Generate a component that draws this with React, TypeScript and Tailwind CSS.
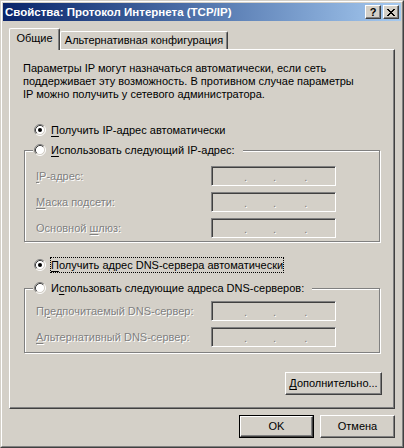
import React from 'react'

// classic Windows 2000 dialog: TCP/IP properties

const raised =
  'border border-t-white border-l-white border-r-[#404040] border-b-[#404040] shadow-[inset_-1px_-1px_0_#808080] bg-[#d4d0c8]'
const sunken =
  'border border-t-[#808080] border-l-[#808080] border-r-white border-b-white shadow-[inset_1px_1px_0_#404040,inset_-1px_-1px_0_#d4d0c8] bg-[#d4d0c8]'
const etched = 'border border-[#808080] shadow-[inset_1px_1px_0_#fff,1px_1px_0_#fff]'
const disabled = 'text-[#808080] [text-shadow:1px_1px_0_#fff]'

function U({ children }: { children: React.ReactNode }) {
  return <span className="underline decoration-1 underline-offset-[2px]">{children}</span>
}

function Radio({ checked }: { checked?: boolean }) {
  return (
    <svg width="12" height="12" viewBox="0 0 12 12" className="shrink-0">
      <circle cx="6" cy="6" r="4.5" fill="#fff" />
      <path d="M2.11 9.89A5.5 5.5 0 0 1 9.89 2.11" stroke="#808080" fill="none" />
      <path d="M9.89 2.11A5.5 5.5 0 0 1 2.11 9.89" stroke="#fff" fill="none" />
      <path d="M2.82 9.18A4.5 4.5 0 0 1 9.18 2.82" stroke="#404040" fill="none" />
      <path d="M9.18 2.82A4.5 4.5 0 0 1 2.82 9.18" stroke="#d4d0c8" fill="none" />
      {checked && <circle cx="6" cy="6" r="2" fill="#000" />}
    </svg>
  )
}

function CloseGlyph() {
  const rows = [
    [0, 1, 6, 7],
    [1, 2, 5, 6],
    [2, 3, 4, 5],
    [3, 4],
    [2, 3, 4, 5],
    [1, 2, 5, 6],
    [0, 1, 6, 7],
  ]
  return (
    <svg width="8" height="7" viewBox="0 0 8 7" shapeRendering="crispEdges">
      {rows.map((cols, y) =>
        cols.map(x => <rect key={`${x}-${y}`} x={x} y={y} width="1" height="1" fill="#000" />)
      )}
    </svg>
  )
}

function IpBox() {
  return (
    <div className={`${sunken} w-[125px] h-[20px] flex items-center text-[#808080]`}>
      <span className="w-[32px] shrink-0" />
      <span className="[text-shadow:1px_1px_0_#fff] leading-[13px] mt-[3px]">.</span>
      <span className="w-[26px] shrink-0" />
      <span className="[text-shadow:1px_1px_0_#fff] leading-[13px] mt-[3px]">.</span>
      <span className="w-[28px] shrink-0" />
      <span className="[text-shadow:1px_1px_0_#fff] leading-[13px] mt-[3px]">.</span>
    </div>
  )
}

function FieldRow({ label }: { label: React.ReactNode }) {
  return (
    <div className="flex items-center h-[20px]">
      <span className={`w-[186px] pl-[11px] leading-[13px] whitespace-nowrap ${disabled}`}>{label}</span>
      <IpBox />
    </div>
  )
}

function RadioRow({ checked, focused, children }: { checked?: boolean; focused?: boolean; children: React.ReactNode }) {
  return (
    <div className="flex items-center h-[16px] ml-[10px]">
      <Radio checked={checked} />
      <span
        className={`ml-[4px] h-[16px] leading-[14px] whitespace-nowrap border ${
          focused ? 'border-dotted border-black' : 'border-transparent'
        }`}
      >
        {children}
      </span>
    </div>
  )
}

function GroupHeader({ children }: { children: React.ReactNode }) {
  return (
    <div className="self-start -mt-[9px] ml-[8px] h-[16px] flex items-center bg-[#d4d0c8] pl-[1px] pr-[7px]">
      <Radio />
      <span className="ml-[4px] h-[16px] leading-[14px] whitespace-nowrap border border-transparent">{children}</span>
    </div>
  )
}

export default function App() {
  return (
    <div className="w-[404px] h-[448px] font-['Liberation_Sans',Arial,sans-serif] text-[11px] text-black select-none">
      <div className="h-full border border-t-[#d4d0c8] border-l-[#d4d0c8] border-r-[#404040] border-b-[#404040]">
        <div className="h-full border border-t-white border-l-white border-r-[#808080] border-b-[#808080] bg-[#d4d0c8] p-px flex flex-col">
          {/* Title bar */}
          <div className="h-[18px] shrink-0 flex items-center justify-between pl-[2px] pr-[2px] bg-linear-to-r from-[#0a246a] to-[#a6caf0]">
            <span className="text-white font-bold text-[11.5px] leading-[18px] whitespace-nowrap">
              Свойства: Протокол Интернета (TCP/IP)
            </span>
            <div className="flex gap-[2px]">
              <div className={`${raised} w-[16px] h-[14px] flex items-center justify-center`}>
                <span className="font-bold text-[11px] leading-[11px] mt-[1px]">?</span>
              </div>
              <div className={`${raised} w-[16px] h-[14px] flex items-center justify-center`}>
                <CloseGlyph />
              </div>
            </div>
          </div>

          <div className="px-[6px] flex flex-col">
            {/* Tabs */}
            <div className="mt-[7px] flex items-end">
              <div className="relative z-10 -mb-px h-[22px] w-[51px] bg-[#d4d0c8] border-l border-t border-r border-l-white border-t-white border-r-[#404040] rounded-t-[2px] shadow-[inset_-1px_0_0_#808080] flex justify-center pt-[3px] leading-[13px]">
                Общие
              </div>
              <div className="h-[18px] w-[168px] border-l border-t border-r border-l-white border-t-white border-r-[#404040] rounded-t-[2px] shadow-[inset_-1px_0_0_#808080] flex justify-center pt-[2px] leading-[13px] whitespace-nowrap">
                Альтернативная конфигурация
              </div>
            </div>

            {/* Panel */}
            <div className="h-[360px] border border-t-white border-l-white border-r-[#404040] border-b-[#404040] shadow-[inset_-1px_-1px_0_#808080] px-[14px] flex flex-col">
              <p className="mt-[12px] -ml-px leading-[13px] whitespace-nowrap">
                Параметры IP могут назначаться автоматически, если сеть
                <br />
                поддерживает эту возможность. В противном случае параметры
                <br />
                IP можно получить у сетевого администратора.
              </p>

              <div className="mt-[21px]">
                <RadioRow checked>
                  <U>П</U>олучить IP-адрес автоматически
                </RadioRow>
              </div>

              <div className={`${etched} mt-[12px] h-[92px] flex flex-col`}>
                <GroupHeader>
                  <U>И</U>спользовать следующий IP-адрес:
                </GroupHeader>
                <div className="mt-[8px] flex flex-col gap-[6px]">
                  <FieldRow label={<><U>I</U>P-адрес:</>} />
                  <FieldRow label={<><U>М</U>аска подсети:</>} />
                  <FieldRow label={<>Основной <U>ш</U>люз:</>} />
                </div>
              </div>

              <div className="mt-[15px]">
                <RadioRow checked focused>
                  <U>П</U>олучить адрес DNS-сервера автоматически
                </RadioRow>
              </div>

              <div className={`${etched} mt-[15px] h-[65px] flex flex-col`}>
                <GroupHeader>
                  И<U>с</U>пользовать следующие адреса DNS-серверов:
                </GroupHeader>
                <div className="mt-[5px] flex flex-col gap-[6px]">
                  <FieldRow label={<>П<U>р</U>едпочитаемый DNS-сервер:</>} />
                  <FieldRow label={<><U>А</U>льтернативный DNS-сервер:</>} />
                </div>
              </div>

              <button className={`${raised} self-end -mr-[2px] mt-[19px] w-[97px] h-[23px] font-normal leading-[13px] whitespace-nowrap`}>
                <U>Д</U>ополнительно...
              </button>
            </div>

            {/* Dialog buttons */}
            <div className="mt-[6px] flex justify-end gap-[6px]">
              <div className="w-[75px] h-[23px] border border-black">
                <button className={`${raised} w-full h-full font-normal leading-[13px]`}>OK</button>
              </div>
              <button className={`${raised} w-[75px] h-[23px] font-normal leading-[13px]`}>Отмена</button>
            </div>
          </div>
        </div>
      </div>
    </div>
  )
}
